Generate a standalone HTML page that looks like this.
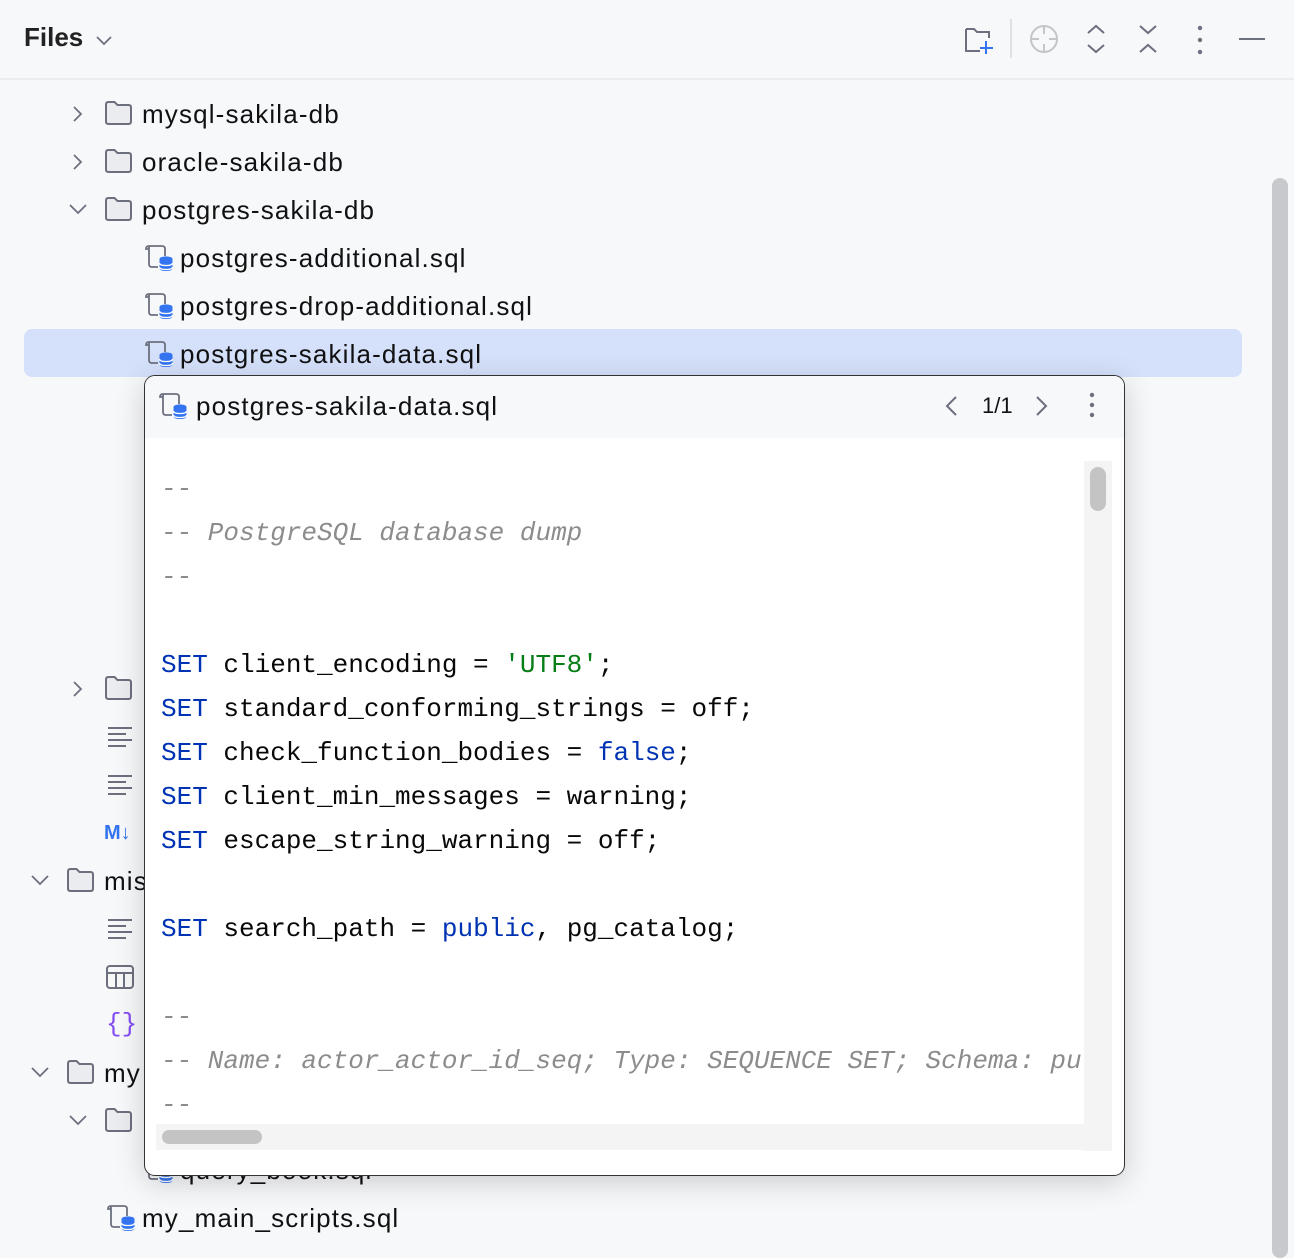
<!DOCTYPE html>
<html><head><meta charset="utf-8"><style>
*{margin:0;padding:0;box-sizing:border-box}
html,body{width:1294px;height:1240px}
body{background:#f7f8fa;position:relative;overflow:hidden;font-family:"Liberation Sans",sans-serif;color:#000}
.a{position:absolute}
.t{position:absolute;font-size:26px;line-height:48px;white-space:nowrap;color:#111;letter-spacing:1.15px}
.code{position:absolute;left:16px;top:29px;font-family:"Liberation Mono",monospace;font-size:26px;line-height:44px;white-space:pre;color:#080808}
.k{color:#0033b3}.s{color:#067d17}.c{color:#8c8c8c;font-style:italic}
</style></head><body>
<div class="a" style="left:24px;top:22px;font-size:26px;font-weight:bold;color:#222">Files</div>
<svg class="a" style="left:94px;top:32px" width="20" height="16"><path d="M3 5l7 7 7-7" fill="none" stroke="#6c707e" stroke-width="1.8"/></svg>
<div class="a" style="left:0;top:78px;width:1294px;height:2px;background:#ebecf0"></div>
<svg class="a" style="left:962px;top:24px" width="34" height="32"><path d="M4 5h8l3 3h12v6M4 5v22h14" fill="none" stroke="#6c707e" stroke-width="2"/><path d="M24 17v13M18 24h13" stroke="#3574f0" stroke-width="2"/></svg>
<div class="a" style="left:1010px;top:19px;width:2px;height:39px;background:#e0e1e4"></div>
<svg class="a" style="left:1028px;top:23px" width="32" height="32"><circle cx="16" cy="16" r="13" fill="none" stroke="#c4c5c9" stroke-width="2"/><path d="M16 3v8M16 21v8M3 16h8M21 16h8" stroke="#c4c5c9" stroke-width="2"/></svg>
<svg class="a" style="left:1084px;top:22px" width="24" height="34"><path d="M4 11l8-7 8 7M4 23l8 7 8-7" fill="none" stroke="#6c707e" stroke-width="2"/></svg>
<svg class="a" style="left:1136px;top:22px" width="24" height="34"><path d="M4 4l8 7 8-7M4 30l8-7 8 7" fill="none" stroke="#6c707e" stroke-width="2"/></svg>
<svg class="a" style="left:1192px;top:24px" width="16" height="32"><circle cx="8" cy="4" r="2.2" fill="#6c707e"/><circle cx="8" cy="16" r="2.2" fill="#6c707e"/><circle cx="8" cy="28" r="2.2" fill="#6c707e"/></svg>
<div class="a" style="left:1239px;top:38px;width:26px;height:2px;background:#6c707e"></div>
<div class="a" style="left:1272px;top:178px;width:16px;height:1080px;border-radius:8px;background:#c8c9cc"></div>
<div class="a" style="left:24px;top:329px;width:1218px;height:48px;border-radius:8px;background:#d5e1fb"></div>

<svg width="0" height="0" style="position:absolute">
<defs>
<g id="fold"><path d="M2 4.5q0-2.5 2.5-2.5h6l3 3h11q2.5 0 2.5 2.5v14q0 2.5-2.5 2.5h-20q-2.5 0-2.5-2.5z" fill="#ebecf0" stroke="#6c707e" stroke-width="2"/></g>
<g id="sql"><path d="M4 3h13q3 0 3 3v7M4 3q-3 0-3 3h3M4 3v18q0 3 3 3h6" fill="none" stroke="#6c707e" stroke-width="1.8"/><ellipse cx="21" cy="16" rx="6.5" ry="2.6" fill="#3574f0"/><path d="M14.5 16v9q0 3 6.5 3t6.5-3v-9" fill="#3574f0"/><path d="M14.5 20q0 2.5 6.5 2.5t6.5-2.5M14.5 24q0 2.5 6.5 2.5t6.5-2.5" fill="none" stroke="#fff" stroke-width="1.3"/></g>
<g id="cr"><path d="M4 3l7 7-7 7" fill="none" stroke="#6c707e" stroke-width="1.8"/></g>
<g id="cd"><path d="M2 5l8 8 8-8" fill="none" stroke="#6c707e" stroke-width="1.8"/></g>
<g id="txt"><path d="M1 2h24M1 8h18M1 14h24M1 20h18" stroke="#6c707e" stroke-width="2"/></g>
</defs></svg>

<svg class="a" style="left:70px;top:104px" width="20" height="20"><use href="#cr"/></svg>
<svg class="a" style="left:104px;top:100px" width="32" height="28"><use href="#fold"/></svg>
<div class="t" style="left:142px;top:90px">mysql-sakila-db</div>
<svg class="a" style="left:70px;top:152px" width="20" height="20"><use href="#cr"/></svg>
<svg class="a" style="left:104px;top:148px" width="32" height="28"><use href="#fold"/></svg>
<div class="t" style="left:142px;top:138px">oracle-sakila-db</div>
<svg class="a" style="left:68px;top:200px" width="20" height="20"><use href="#cd"/></svg>
<svg class="a" style="left:104px;top:196px" width="32" height="28"><use href="#fold"/></svg>
<div class="t" style="left:142px;top:186px">postgres-sakila-db</div>
<svg class="a" style="left:145px;top:243px" width="32" height="30"><use href="#sql"/></svg>
<div class="t" style="left:180px;top:234px">postgres-additional.sql</div>
<svg class="a" style="left:145px;top:291px" width="32" height="30"><use href="#sql"/></svg>
<div class="t" style="left:180px;top:282px">postgres-drop-additional.sql</div>
<svg class="a" style="left:145px;top:339px" width="32" height="30"><use href="#sql"/></svg>
<div class="t" style="left:180px;top:330px">postgres-sakila-data.sql</div>

<svg class="a" style="left:70px;top:679px" width="20" height="20"><use href="#cr"/></svg>
<svg class="a" style="left:104px;top:675px" width="32" height="28"><use href="#fold"/></svg>
<svg class="a" style="left:107px;top:726px" width="28" height="24"><use href="#txt"/></svg>
<svg class="a" style="left:107px;top:774px" width="28" height="24"><use href="#txt"/></svg>
<div class="a" style="left:104px;top:822px;font-size:20px;font-weight:bold;color:#3574f0">M↓</div>
<svg class="a" style="left:30px;top:871px" width="20" height="20"><use href="#cd"/></svg>
<svg class="a" style="left:66px;top:867px" width="32" height="28"><use href="#fold"/></svg>
<div class="t" style="left:104px;top:857px">mis</div>
<svg class="a" style="left:107px;top:918px" width="28" height="24"><use href="#txt"/></svg>
<svg class="a" style="left:105px;top:964px" width="30" height="26"><rect x="2" y="2" width="26" height="22" rx="3" fill="none" stroke="#6c707e" stroke-width="2"/><path d="M2 9h26M11 9v15M19 9v15" stroke="#6c707e" stroke-width="2"/></svg>
<div class="a" style="left:106px;top:1009px;font-size:26px;color:#834df0;font-family:'Liberation Mono',monospace">{}</div>
<svg class="a" style="left:30px;top:1063px" width="20" height="20"><use href="#cd"/></svg>
<svg class="a" style="left:66px;top:1059px" width="32" height="28"><use href="#fold"/></svg>
<div class="t" style="left:104px;top:1049px">my</div>
<svg class="a" style="left:68px;top:1111px" width="20" height="20"><use href="#cd"/></svg>
<svg class="a" style="left:104px;top:1107px" width="32" height="28"><use href="#fold"/></svg>
<svg class="a" style="left:145px;top:1155px" width="32" height="30"><use href="#sql"/></svg>
<div class="t" style="left:180px;top:1146px">query_book.sql</div>
<svg class="a" style="left:107px;top:1203px" width="32" height="30"><use href="#sql"/></svg>
<div class="t" style="left:142px;top:1194px">my_main_scripts.sql</div>

<div class="a" style="left:144px;top:375px;width:981px;height:801px;border:1.5px solid #333;border-radius:11px;background:#fff;overflow:hidden;box-shadow:0 6px 30px rgba(0,0,0,.18)">
  <div class="a" style="left:0;top:0;width:100%;height:62px;background:#f7f8fa"></div>
  <div class="a" style="left:0;top:62px;width:940px;height:712px;overflow:hidden">
<div class="code"><span class="c">--
-- PostgreSQL database dump
--</span>

<span class="k">SET</span> client_encoding = <span class="s">'UTF8'</span>;
<span class="k">SET</span> standard_conforming_strings = off;
<span class="k">SET</span> check_function_bodies = <span class="k">false</span>;
<span class="k">SET</span> client_min_messages = warning;
<span class="k">SET</span> escape_string_warning = off;

<span class="k">SET</span> search_path = <span class="k">public</span>, pg_catalog;

<span class="c">--
-- Name: actor_actor_id_seq; Type: SEQUENCE SET; Schema: pu
--</span></div>
  </div>
</div>
<svg class="a" style="left:159px;top:391px" width="32" height="30"><use href="#sql"/></svg>
<div class="t" style="left:196px;top:382px">postgres-sakila-data.sql</div>
<svg class="a" style="left:942px;top:394px" width="20" height="24"><path d="M14 3l-9 9 9 9" fill="none" stroke="#6c707e" stroke-width="2"/></svg>
<div class="a" style="left:982px;top:393px;font-size:22px;color:#111">1/1</div>
<svg class="a" style="left:1031px;top:394px" width="20" height="24"><path d="M6 3l9 9-9 9" fill="none" stroke="#6c707e" stroke-width="2"/></svg>
<svg class="a" style="left:1084px;top:391px" width="16" height="30"><circle cx="8" cy="4" r="2.2" fill="#6c707e"/><circle cx="8" cy="14" r="2.2" fill="#6c707e"/><circle cx="8" cy="24" r="2.2" fill="#6c707e"/></svg>
<div class="a" style="left:1084px;top:461px;width:28px;height:690px;background:#f4f4f4"></div>
<div class="a" style="left:1090px;top:467px;width:16px;height:44px;border-radius:8px;background:#c4c4c4"></div>
<div class="a" style="left:156px;top:1124px;width:928px;height:26px;background:#f4f4f4"></div>
<div class="a" style="left:162px;top:1130px;width:100px;height:14px;border-radius:7px;background:#c4c4c4"></div>
</body></html>
